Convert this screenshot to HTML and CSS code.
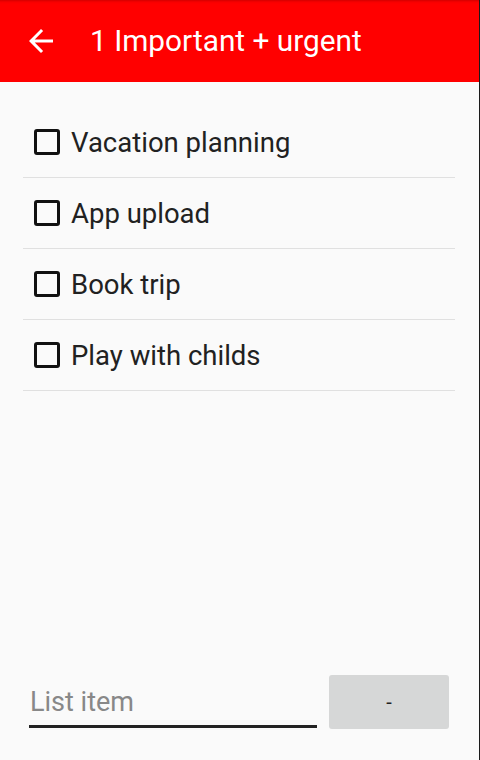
FILE: index.html
```html
<!DOCTYPE html>
<html>
<head>
<meta charset="utf-8">
<link rel="stylesheet" href="styles.css">
</head>
<body>
<div class="screen">
  <header class="appbar">
    <svg class="back" viewBox="0 0 24 24" width="36" height="36"><path d="M20 11H7.83l5.59-5.59L12 4l-8 8 8 8 1.41-1.41L7.83 13H20v-2z" fill="#fff"/></svg>
    <h1 class="title">1 Important + urgent</h1>
  </header>
  <main class="list">
    <div class="row"><span class="box"></span><span class="label">Vacation planning</span></div>
    <div class="row"><span class="box"></span><span class="label">App upload</span></div>
    <div class="row"><span class="box"></span><span class="label">Book trip</span></div>
    <div class="row"><span class="box"></span><span class="label">Play with childs</span></div>
  </main>
  <footer class="composer">
    <div class="field"><span class="placeholder">List item</span></div>
    <div class="btn">-</div>
  </footer>
</div>
</body>
</html>
```
FILE: styles.css
```css
html, body {
  margin: 0;
  padding: 0;
}
body {
  width: 480px;
  height: 760px;
  overflow: hidden;
  background: #fafafa;
  font-family: Roboto, "Noto Sans", sans-serif;
}
.screen {
  height: 760px;
  display: flex;
  flex-direction: column;
  border-right: 1px solid #1a1a1a;
  box-sizing: border-box;
}
.appbar {
  height: 82px;
  flex: none;
  background: linear-gradient(#d40000 0px, #f70000 2px, #ff0000 4px, #ff0000 100%);
  display: flex;
  align-items: center;
  padding-left: 23px;
}
.back {
  display: block;
  flex: none;
}
.title {
  margin: 0 0 0 31px;
  color: #fff;
  font-weight: 400;
  font-size: 29.8px;
  line-height: 1;
}
.list {
  flex: 1;
  padding: 25px 24px 0 23px;
}
.row {
  height: 70px;
  border-bottom: 1px solid #e0e0e0;
  display: flex;
  align-items: center;
}
.box {
  width: 20px;
  height: 20px;
  border: 3px solid #111;
  border-radius: 3px;
  margin-left: 11px;
  flex: none;
}
.label {
  margin-left: 11px;
  font-size: 27.5px;
  color: #212121;
}
.composer {
  flex: none;
  display: flex;
  align-items: flex-end;
  gap: 12px;
  padding: 0 30px 32px 29px;
}
.field {
  width: 288px;
  height: 52px;
  border-bottom: 3px solid #222;
  box-sizing: border-box;
  display: flex;
  align-items: center;
  padding-top: 2px;
}
.placeholder {
  font-size: 27px;
  color: #888;
  margin-left: 1px;
}
.btn {
  width: 120px;
  height: 54px;
  background: #d6d7d7;
  border-radius: 3px;
  display: flex;
  align-items: center;
  justify-content: center;
  font-size: 20px;
  color: #222;
  margin-bottom: -1px;
}
```
